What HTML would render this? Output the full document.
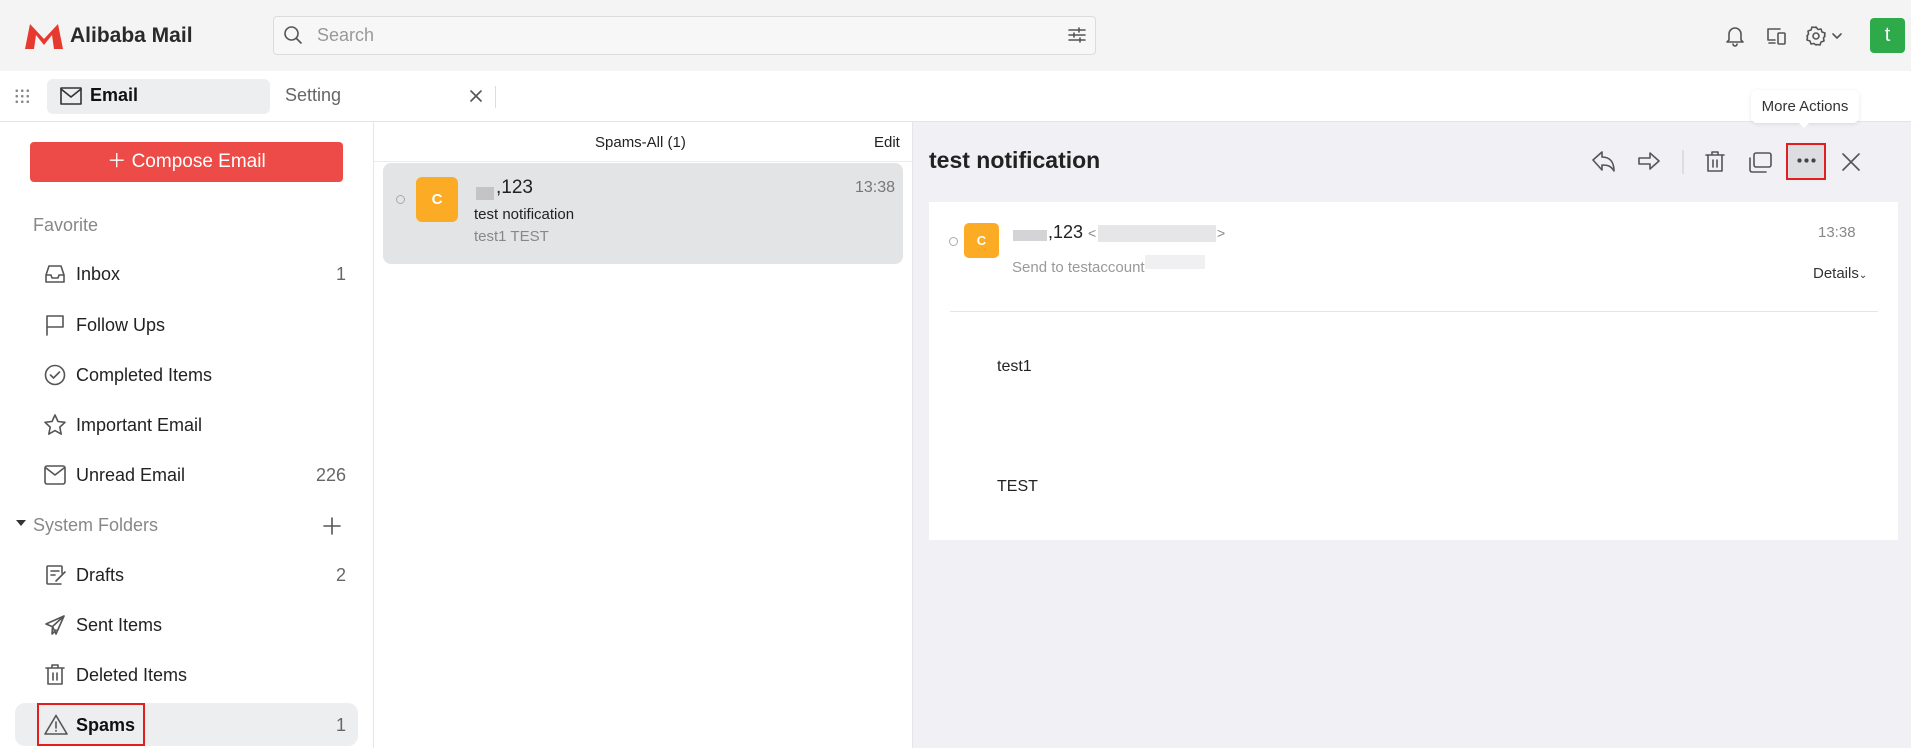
<!DOCTYPE html>
<html><head><meta charset="utf-8"><style>
*{box-sizing:border-box;margin:0;padding:0}
body{width:1911px;height:748px;overflow:hidden;font-family:"Liberation Sans",Arial,sans-serif;background:#fff;position:relative;color:#222}
.a{position:absolute}
svg{position:absolute;fill:none;stroke:#555;stroke-width:1.6;stroke-linecap:round;stroke-linejoin:round}
.side{font-size:18px;color:#222}
.cnt{position:absolute;right:28px;color:#666;font-size:18px}
</style></head><body>
<!-- top bar -->
<div class="a" style="left:0;top:0;width:1911px;height:71px;background:#f4f4f4"></div>
<svg style="left:24px;top:22px" width="40" height="28" viewBox="0 0 40 28"><path d="M1 27 L6 2 L20 17 L34 2 L39 27 L30 27 L28 13 L20 23 L12 13 L10 27Z" fill="#e8392f" stroke="none"/></svg>
<div class="a" style="left:70px;top:24px;font-size:21px;font-weight:bold;color:#2a2a2a">Alibaba Mail</div>
<div class="a" style="left:273px;top:16px;width:823px;height:39px;border:1px solid #dcdcdc;border-radius:4px;background:#f7f7f7"></div>
<svg style="left:283px;top:25px" width="20" height="20" viewBox="0 0 20 20" style="stroke:#888"><circle cx="8.5" cy="8.5" r="6.5"/><path d="M13.5 13.5 L18 18"/></svg>
<div class="a" style="left:317px;top:25px;font-size:18px;color:#999">Search</div>
<svg style="left:1068px;top:26px" width="18" height="18" viewBox="0 0 18 18"><path d="M1 4H17M1 9H17M1 14H17"/><path d="M11 2V6M6 7V11M12 12V16"/></svg>
<svg style="left:1725px;top:25px" width="20" height="22" viewBox="0 0 20 22"><path d="M4 15V9a6 6 0 0 1 12 0v6l2 2H2z"/><path d="M8 19a2 2 0 0 0 4 0"/></svg>
<svg style="left:1766px;top:26px" width="22" height="20" viewBox="0 0 22 20"><path d="M14 3H2v11h7M3 17h6"/><rect x="12" y="7" width="7" height="11" rx="1"/></svg>
<svg style="left:1805px;top:25px" width="22" height="22" viewBox="0 0 22 22"><circle cx="11" cy="11" r="3"/><path d="M11 2l2 2.5 3-.5 1 3 3 1-.5 3L20 11l-1.5 2 .5 3-3 1-1 3-3-.5L11 20l-2-1.5-3 .5-1-3-3-1 .5-3L2 11l1.5-2-.5-3 3-1 1-3 3 .5z"/></svg>
<svg style="left:1832px;top:32px" width="10" height="8" viewBox="0 0 10 8"><path d="M1 2l4 4 4-4"/></svg>
<div class="a" style="left:1870px;top:18px;width:35px;height:35px;background:#2eaa4a;border-radius:4px;color:#fff;font-size:20px;text-align:center;line-height:35px">t</div>
<!-- tab row -->
<div class="a" style="left:0;top:121px;width:1911px;height:1px;background:#e4e4e4"></div>
<div class="a" style="left:14px;top:88px;width:16px;height:16px;background-image:radial-gradient(circle,#888 1.2px,transparent 1.5px);background-size:5.5px 5.5px"></div>
<div class="a" style="left:47px;top:79px;width:223px;height:35px;background:#eceef0;border-radius:6px"></div>
<svg style="left:60px;top:87px" width="22" height="18" viewBox="0 0 22 18"><rect x="1" y="1" width="20" height="16" stroke="#333"/><path d="M1 2l10 8 10-8" stroke="#333"/></svg>
<div class="a" style="left:90px;top:85px;font-size:18px;font-weight:bold;color:#111">Email</div>
<div class="a" style="left:285px;top:85px;font-size:18px;color:#666">Setting</div>
<svg style="left:470px;top:90px" width="12" height="12" viewBox="0 0 12 12"><path d="M1 1l10 10M11 1L1 11"/></svg>
<div class="a" style="left:495px;top:86px;width:1px;height:22px;background:#ddd"></div>
<!-- sidebar -->
<div class="a" style="left:373px;top:122px;width:1px;height:626px;background:#e6e6e6"></div>
<div class="a" style="left:30px;top:142px;width:313px;height:40px;background:#ec4b47;border-radius:4px;color:#fff;font-size:19px;text-align:center;line-height:40px">＋ Compose Email</div>
<div class="a side" style="left:33px;top:215px;color:#888">Favorite</div>
<div class="a side" style="left:0;top:264px;width:374px;height:20px"><span class="a" style="left:76px">Inbox</span><span class="cnt">1</span></div>
<svg style="left:44px;top:264px" width="22" height="20" viewBox="0 0 22 20"><path d="M2 11L5 2h12l3 9v7H2zM2 11h5l1 3h6l1-3h5"/></svg>
<div class="a side" style="left:76px;top:315px">Follow Ups</div>
<svg style="left:45px;top:314px" width="20" height="22" viewBox="0 0 20 22"><path d="M2 21V2h16v11H2"/></svg>
<div class="a side" style="left:76px;top:365px">Completed Items</div>
<svg style="left:44px;top:364px" width="22" height="22" viewBox="0 0 22 22"><circle cx="11" cy="11" r="9.5"/><path d="M6.5 11l3 3 6-6"/></svg>
<div class="a side" style="left:76px;top:415px">Important Email</div>
<svg style="left:43px;top:413px" width="24" height="23" viewBox="0 0 24 23"><path d="M12 2l3 6.5 7 .8-5.2 4.8 1.4 7L12 17.6l-6.2 3.5 1.4-7L2 9.3l7-.8z"/></svg>
<div class="a side" style="left:0;top:465px;width:374px"><span class="a" style="left:76px">Unread Email</span><span class="cnt">226</span></div>
<svg style="left:44px;top:465px" width="22" height="20" viewBox="0 0 22 20"><rect x="1" y="1" width="20" height="18" rx="2"/><path d="M2 3l9 7 9-7"/></svg>
<div class="a" style="left:16px;top:520px;width:0;height:0;border-left:5px solid transparent;border-right:5px solid transparent;border-top:6px solid #333"></div>
<div class="a side" style="left:33px;top:515px;color:#888">System Folders</div>
<svg style="left:323px;top:517px" width="18" height="18" viewBox="0 0 18 18" style="stroke:#777"><path d="M9 1v16M1 9h16"/></svg>
<div class="a side" style="left:0;top:565px;width:374px"><span class="a" style="left:76px">Drafts</span><span class="cnt">2</span></div>
<svg style="left:45px;top:564px" width="22" height="22" viewBox="0 0 22 22"><path d="M17 9V3a1 1 0 0 0-1-1H3a1 1 0 0 0-1 1v16a1 1 0 0 0 1 1h13M6 7h8M6 11h4M11 17l9-9"/></svg>
<div class="a side" style="left:76px;top:615px">Sent Items</div>
<svg style="left:44px;top:614px" width="22" height="22" viewBox="0 0 22 22"><path d="M20 2L2 10l6 2.5M20 2l-8 18-3.5-7.5M20 2L8.5 12.5L8 20l4-4"/></svg>
<div class="a side" style="left:76px;top:665px">Deleted Items</div>
<svg style="left:45px;top:663px" width="20" height="23" viewBox="0 0 20 23"><path d="M1 5h18M7 5V2h6v3M3 5v16h14V5M8 10v7M12 10v7"/></svg>
<div class="a" style="left:15px;top:703px;width:343px;height:43px;background:#eceef0;border-radius:10px"></div>
<div class="a side" style="left:0;top:715px;width:374px"><span class="a" style="left:76px;font-weight:bold;color:#111">Spams</span><span class="cnt">1</span></div>
<svg style="left:44px;top:714px" width="24" height="21" viewBox="0 0 24 21"><path d="M12 1.5L23 20H1z"/><path d="M12 8v6M12 16.5v.5"/></svg>
<div class="a" style="left:37px;top:703px;width:108px;height:43px;border:2px solid #e02020"></div>
<!-- list -->
<div class="a" style="left:912px;top:122px;width:1px;height:626px;background:#e6e6e6"></div>
<div class="a" style="left:374px;top:161px;width:538px;height:1px;background:#ececec"></div>
<div class="a" style="left:595px;top:134px;font-size:15px;color:#222">Spams-All (1)</div>
<div class="a" style="left:874px;top:134px;font-size:15px;color:#222">Edit</div>
<div class="a" style="left:383px;top:163px;width:520px;height:101px;background:#e3e4e6;border-radius:8px"></div>
<div class="a" style="left:396px;top:195px;width:9px;height:9px;border:1px solid #aaa;border-radius:50%"></div>
<div class="a" style="left:416px;top:177px;width:42px;height:45px;background:#fcab25;border-radius:6px;color:#fff;font-size:15px;font-weight:bold;text-align:center;line-height:45px">C</div>
<div class="a" style="left:476px;top:187px;width:18px;height:13px;background:#c4c4c6"></div>
<div class="a" style="left:496px;top:177px;font-size:19px;color:#222">,123</div>
<div class="a" style="left:855px;top:179px;font-size:16px;color:#777">13:38</div>
<div class="a" style="left:474px;top:206px;font-size:15px;color:#222">test notification</div>
<div class="a" style="left:474px;top:228px;font-size:15px;color:#888">test1 TEST</div>
<!-- right -->
<div class="a" style="left:913px;top:122px;width:998px;height:626px;background:#f0f0f5"></div>
<div class="a" style="left:929px;top:147px;font-size:23px;font-weight:bold;color:#222">test notification</div>
<svg style="left:1592px;top:150px" width="24" height="22" viewBox="0 0 24 22"><path d="M1 10L10 2v5c8 0 12 5 12 14-3-5-6-6-12-6v5z"/></svg>
<svg style="left:1637px;top:151px" width="24" height="20" viewBox="0 0 24 20"><path d="M2 7h11V2l9 8-9 8v-5H2z"/></svg>
<div class="a" style="left:1682px;top:150px;width:2px;height:24px;background:#ddd"></div>
<svg style="left:1705px;top:150px" width="20" height="23" viewBox="0 0 20 23"><path d="M1 5h18M7 5V2h6v3M3 5v16h14V5M8 10v7M12 10v7"/></svg>
<svg style="left:1748px;top:152px" width="24" height="22" viewBox="0 0 24 22"><rect x="6" y="1" width="17" height="14" rx="2"/><path d="M2 6v12a2 2 0 0 0 2 2h14"/></svg>
<div class="a" style="left:1786px;top:143px;width:40px;height:37px;background:#dcdde0;border:2px solid #e02020"></div>
<div class="a" style="left:1796px;top:158px;width:20px;height:5px;background-image:radial-gradient(circle,#444 2px,transparent 2.3px);background-size:7px 5px"></div>
<svg style="left:1842px;top:153px" width="18" height="18" viewBox="0 0 18 18"><path d="M1 1l16 16M17 1L1 17"/></svg>
<div class="a" style="left:1751px;top:90px;width:108px;height:33px;background:#fff;border-radius:6px;box-shadow:0 1px 4px rgba(0,0,0,.1);font-size:15px;color:#333;text-align:center;line-height:33px">More Actions</div>
<div class="a" style="left:1798px;top:122px;width:0;height:0;border-left:6px solid transparent;border-right:6px solid transparent;border-top:6px solid #fff"></div>
<div class="a" style="left:929px;top:202px;width:969px;height:338px;background:#fff"></div>
<div class="a" style="left:949px;top:237px;width:9px;height:9px;border:1px solid #aaa;border-radius:50%"></div>
<div class="a" style="left:964px;top:223px;width:35px;height:35px;background:#fcab25;border-radius:5px;color:#fff;font-size:13px;font-weight:bold;text-align:center;line-height:35px">C</div>
<div class="a" style="left:1013px;top:230px;width:34px;height:11px;background:#d4d4d6"></div>
<div class="a" style="left:1048px;top:222px;font-size:18px;color:#222">,123 <span style="color:#888;font-size:14px">&lt;</span></div>
<div class="a" style="left:1098px;top:225px;width:118px;height:17px;background:#e6e6e8"></div>
<div class="a" style="left:1217px;top:225px;font-size:14px;color:#888">&gt;</div>
<div class="a" style="left:1012px;top:259px;font-size:15px;color:#999">Send to testaccount</div>
<div class="a" style="left:1145px;top:255px;width:60px;height:14px;background:#f0f0f2"></div>
<div class="a" style="left:1818px;top:224px;font-size:15px;color:#888">13:38</div>
<div class="a" style="left:1813px;top:265px;font-size:15px;color:#333">Details<span style="font-size:10px">⌄</span></div>
<div class="a" style="left:950px;top:311px;width:928px;height:1px;background:#e6e6e6"></div>
<div class="a" style="left:997px;top:358px;font-size:16px;color:#222">test1</div>
<div class="a" style="left:997px;top:478px;font-size:16px;color:#222">TEST</div>
</body></html>
